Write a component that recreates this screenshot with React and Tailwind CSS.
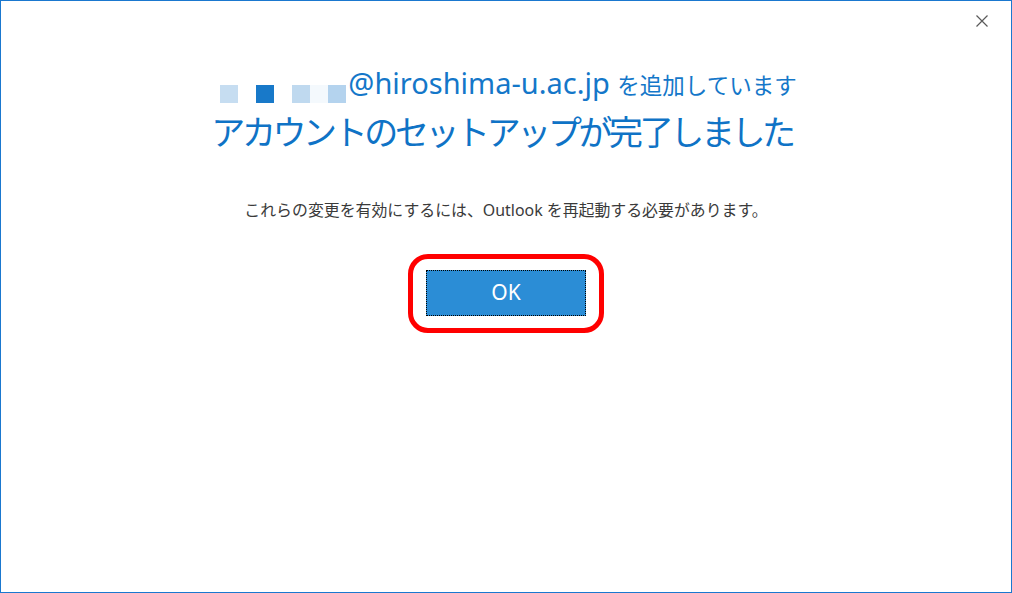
import React from "react";

export default function App() {
  return (
    <div className="w-[1012px] h-[593px] bg-white border border-[#1a78cf] relative overflow-hidden" style={{ fontFamily: '"Noto Sans", "Noto Sans CJK JP", sans-serif' }}>
      <button className="absolute right-[22px] top-[13px] w-[14px] h-[14px] text-[#555]">
        <svg width="14" height="14" viewBox="0 0 14 14"><path d="M1.5 1.5 L12.5 12.5 M12.5 1.5 L1.5 12.5" stroke="#5a5a5a" strokeWidth="1.2" /></svg>
      </button>
      <div className="flex flex-col items-center pt-[66px]">
        <div className="flex items-end h-[38px] ml-[5px]">
          <div className="flex mb-[2px] mr-[2px]">
            <div className="w-[18px] h-[18px] bg-[#c6ddf1]"></div>
            <div className="w-[18px] h-[18px] ml-[18px] bg-[#1879c9]"></div>
            <div className="w-[18px] h-[18px] ml-[18px] bg-[#bfd9ef]"></div>
            <div className="w-[18px] h-[18px] bg-[#f4f9fd]"></div>
            <div className="w-[18px] h-[18px] bg-[#b4d3ee]"></div>
          </div>
          <div className="text-[29px] leading-[38px] text-[#1477c9] whitespace-nowrap">
            @hiroshima-u.ac.jp <span className="text-[22.5px]">を追加しています</span>
          </div>
        </div>
        <div className="text-[34px] leading-[46px] text-[#0f73c6] mt-[4px] tracking-[-3.4px] mr-[8px]">
          アカウントのセットアップが完了しました
        </div>
        <div className="text-[15.9px] leading-[22px] text-[#3a3a3a] mt-[44px]">
          これらの変更を有効にするには、Outlook を再起動する必要があります。
        </div>
        <div className="mt-[33px] border-[5px] border-[#ff0000] rounded-[20px] px-[13px] pt-[11px] pb-[12px]">
          <button className="w-[160px] h-[46px] bg-[#2b8dd6] border border-dotted border-black text-white text-[21px] flex items-center justify-center">
            OK
          </button>
        </div>
      </div>
    </div>
  );
}
